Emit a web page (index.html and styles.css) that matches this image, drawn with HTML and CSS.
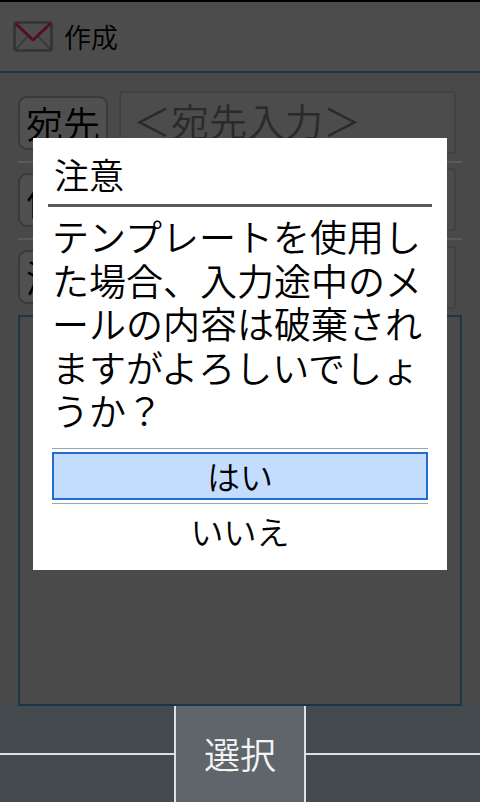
FILE: index.html
```html
<!DOCTYPE html>
<html lang="ja">
<head>
<meta charset="utf-8">
<title>作成</title>
<link rel="stylesheet" href="styles.css">
</head>
<body>
<div class="screen">
  <header class="header">
    <svg class="mail" viewBox="0 0 40 32" width="40" height="32">
      <rect x="1.5" y="1.5" width="37" height="28" rx="2" fill="none" stroke="#333333" stroke-width="2.6"/>
      <path d="M3 28 L15 15 M37 28 L25 15" fill="none" stroke="#363636" stroke-width="1.6"/>
      <path d="M3.5 3.5 L20 19 L36.5 3.5" fill="none" stroke="#5a0a24" stroke-width="3" stroke-linecap="round" stroke-linejoin="round"/>
    </svg>
    <span class="header-title">作成</span>
  </header>
  <main class="form">
    <div class="row">
      <div class="label">宛先</div>
      <div class="field">＜宛先入力＞</div>
    </div>
    <div class="row">
      <div class="label">件名</div>
      <div class="field"></div>
    </div>
    <div class="row row-last">
      <div class="label">添付</div>
      <div class="field"></div>
    </div>
    <div class="body-area"></div>
  </main>
  <footer class="footer">
    <div class="soft-side"></div>
    <div class="soft-key">選択</div>
    <div class="soft-side"></div>
  </footer>
  <section class="dialog">
    <h1 class="dialog-title">注意</h1>
    <p class="dialog-text">テンプレートを使用し<br>た場合、入力途中のメ<br>ールの内容は破棄され<br>ますがよろしいでしょ<br>うか？</p>
    <div class="choices">
      <div class="choice choice-on">はい</div>
      <div class="choice">いいえ</div>
    </div>
  </section>
</div>
</body>
</html>
```
FILE: styles.css
```css
* { box-sizing: border-box; }
html, body { margin: 0; padding: 0; }
body { width: 480px; height: 802px; overflow: hidden; background: #4b4b4b; font-family: "Noto Sans CJK JP", "Noto Sans", sans-serif; font-weight: 350; }
.screen { position: relative; width: 480px; height: 802px; display: flex; flex-direction: column; border-top: 2px solid #000; background: #494949; }
.header { height: 71px; flex: none; display: flex; align-items: center; padding: 0 0 0 13px; gap: 11px; background: #4c4c4c; border-bottom: 2px solid #15394a; }
.mail { flex: none; margin-top: 1px; }
.header-title { color: #000; font-size: 27px; line-height: 1; }
.form { flex: 1; display: flex; flex-direction: column; padding: 19px 18px 0; }
.row { height: 71px; margin-bottom: 6px; display: flex; align-items: center; gap: 11px; border-bottom: 2px solid #5a5a5a; padding-bottom: 8px; }
.row-last { border-bottom: none; height: 62px; margin-bottom: 7px; padding-bottom: 0; }
.label { width: 90px; height: 54px; flex: none; border: 2px solid #3a3a3a; border-radius: 9px; background: #505050; color: #000; font-size: 37px; line-height: 50px; text-align: center; white-space: nowrap; overflow: hidden; }
.field { width: 337px; height: 63px; flex: none; border: 2px solid #424242; border-radius: 4px; background: #4c4c4c; color: #2a2a2a; font-size: 38px; line-height: 54px; padding-left: 12px; white-space: nowrap; overflow: hidden; }
.body-area { width: 444px; height: 391px; flex: none; border: 2px solid #15394a; background: #4a4a4a; }
.footer { height: 96px; flex: none; display: flex; background: #434a4d; }
.soft-side { flex: 1; position: relative; }
.soft-side::after { content: ""; position: absolute; left: 0; right: 0; top: 47px; height: 2px; background: #dde0e2; }
.soft-key { width: 132px; flex: none; background: #5e666c; border-left: 2px solid #dde0e2; border-right: 2px solid #dde0e2; color: #f4f4f4; font-size: 36px; line-height: 94px; text-align: center; }
.dialog { position: absolute; left: 33px; top: 136px; width: 414px; height: 432px; background: #fff; padding: 0 15px 0 15px; }
.dialog-title { margin: 0; height: 69px; border-bottom: 3px solid #5a5a5a; padding-left: 6px; font-size: 35px; font-weight: 350; line-height: 72px; color: #000; }
.dialog-text { margin: 8px 0 0 0; padding-left: 4px; font-size: 37px; line-height: 43.5px; color: #000; white-space: nowrap; height: 222px; }
.choices { margin: 11px 4px 0; border-top: 1px solid #a0a4a8; padding-top: 3px; }
.choice { height: 48px; font-size: 33px; line-height: 46px; text-align: center; color: #000; }
.choice-on { background: #c4ddff; border: 2px solid #1e6fd0; line-height: 44px; margin-bottom: 3px; }
.choice-on + .choice { border-top: 1px solid #a0a4a8; height: 58px; line-height: 54px; }
```
